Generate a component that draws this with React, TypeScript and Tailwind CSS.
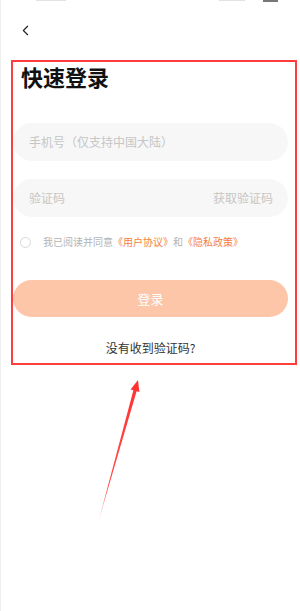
import { ChevronLeft } from 'lucide-react'

const font = 'font-["Noto_Sans_CJK_SC","Noto_Sans",sans-serif]'

function StatusBar() {
  return (
    <div className="h-[2px] flex items-start">
      <span className="ml-[35px] w-[30px] h-[1px] bg-[#e2e2e2]" />
      <span className="ml-[153px] w-[26px] h-[1px] bg-[#e2e2e2]" />
      <span className="ml-[18px] w-[15px] h-[2px] bg-[#777]" />
    </div>
  )
}

function Arrow() {
  return (
    <svg className="absolute left-0 top-0 pointer-events-none" width="300" height="611" viewBox="0 0 300 611">
      <defs>
        <linearGradient id="shaft" x1="97" y1="523" x2="137" y2="380" gradientUnits="userSpaceOnUse">
          <stop offset="0" stopColor="#ff3b3b" stopOpacity="0.25" />
          <stop offset="0.25" stopColor="#ff3b3b" stopOpacity="0.9" />
          <stop offset="1" stopColor="#ff3030" />
        </linearGradient>
      </defs>
      <polygon
        points="137,380 138.4,392 135.6,391.2 97,523 132.4,390.2 129.6,389.4"
        fill="url(#shaft)"
      />
    </svg>
  )
}

export default function App() {
  return (
    <div className={`relative w-[300px] h-[611px] overflow-hidden bg-white border-l border-[#efefef] ${font}`}>
      <StatusBar />
      <div className="h-[58px] pl-[16px] pt-[20px]">
        <ChevronLeft size={17} strokeWidth={1.6} className="text-[#222]" />
      </div>

      <div className="pl-[12px] pr-[12px]">
        <h1 className="pl-[8px] mt-[2px] text-[22px] leading-[28px] font-bold text-[#111]">快速登录</h1>

        <div className="mt-[33px] h-[38px] rounded-full bg-[#f7f7f7] pl-[16px] flex items-center text-[12px] text-[#c6c6c6]">
          手机号（仅支持中国大陆）
        </div>

        <div className="mt-[18px] h-[38px] rounded-full bg-[#f7f7f7] pl-[16px] pr-[15px] flex items-center justify-between text-[12px] text-[#c6c6c6]">
          <span>验证码</span>
          <span>获取验证码</span>
        </div>

        <div className="mt-[17px] h-[16px] flex items-center pl-[7px] text-[10px] leading-[16px]">
          <span className="w-[11px] h-[11px] rounded-full border border-[#d8d8d8]" />
          <span className="ml-[12px] text-[#b4b4b4]">我已阅读并同意</span>
          <span className="text-[#f5813f]">《用户协议》</span>
          <span className="text-[#b4b4b4]">和</span>
          <span className="text-[#f5813f]">《隐私政策》</span>
        </div>

        <div className="mt-[30px] h-[37px] rounded-full bg-[#fec6a9] flex items-center justify-center text-[13px] text-white">
          登录
        </div>

        <p className="mt-[23px] text-center text-[12px] leading-[16px] text-[#333]">没有收到验证码?</p>
      </div>

      <div className="absolute left-[10px] top-[60px] w-[286px] h-[305px] border-2 border-[#ff3d3d]" />
      <Arrow />
    </div>
  )
}
